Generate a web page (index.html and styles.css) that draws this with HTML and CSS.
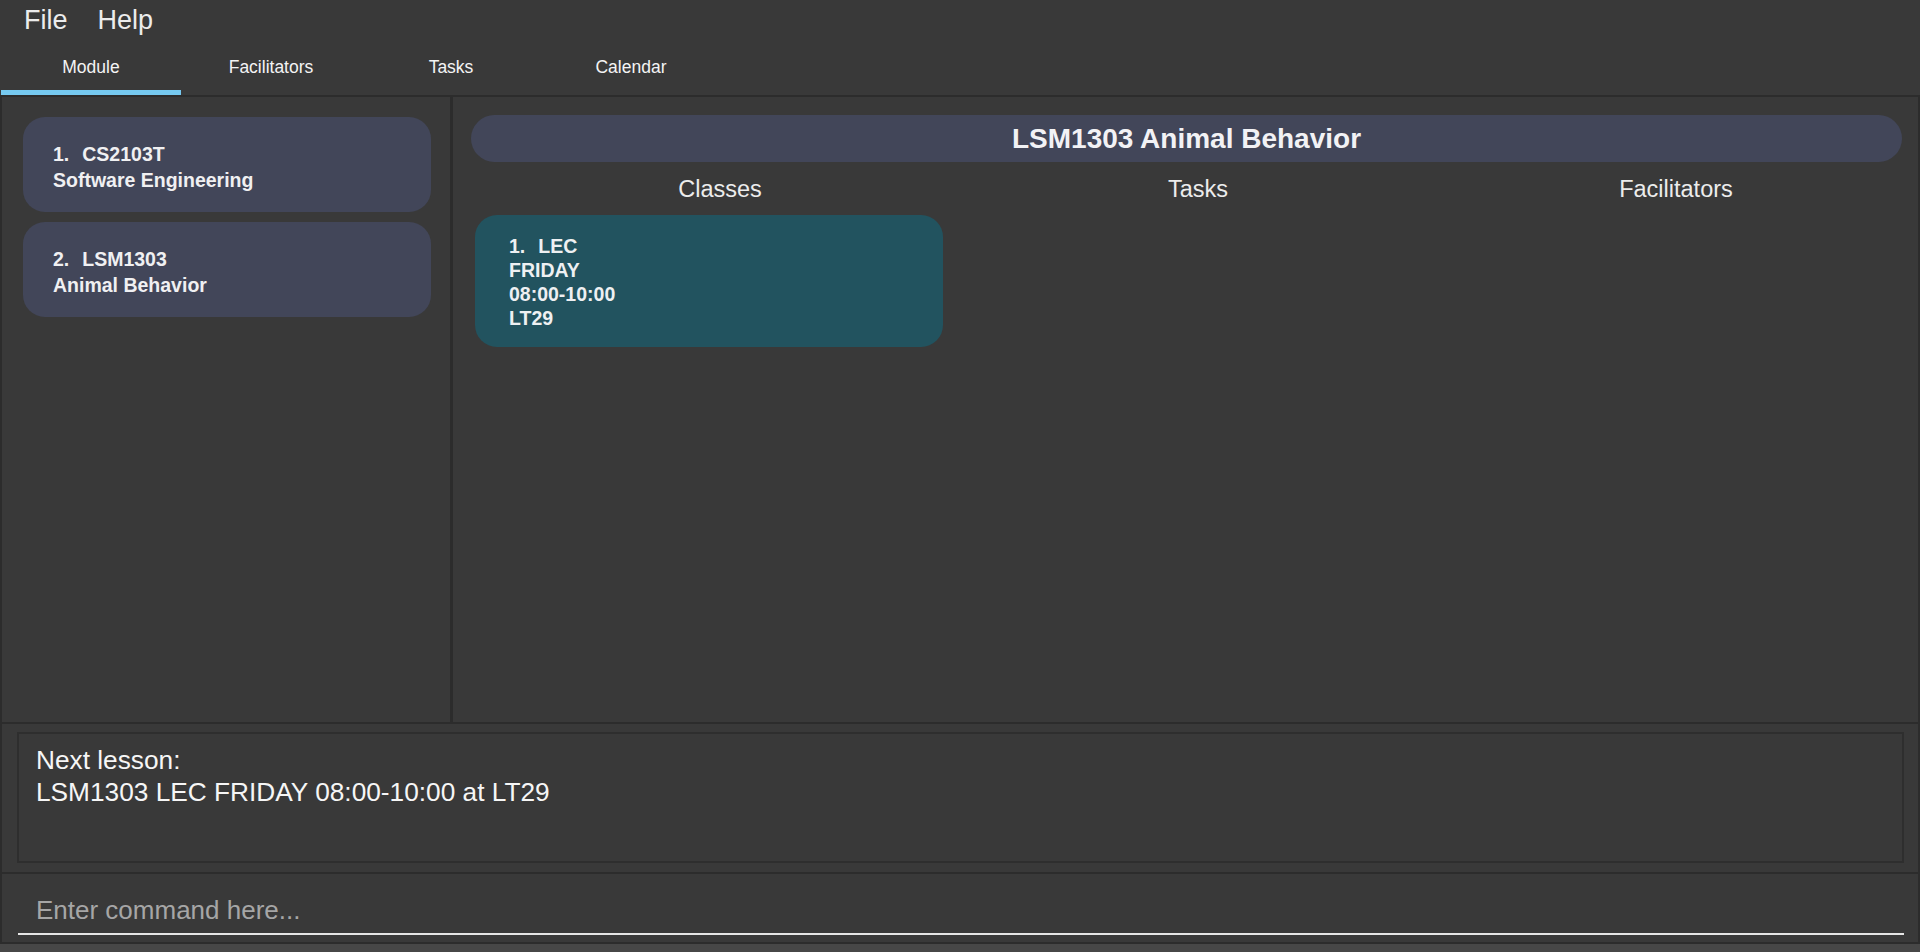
FILE: index.html
```html
<!DOCTYPE html>
<html lang="en">
<head>
<meta charset="utf-8">
<title>Module</title>
<link rel="stylesheet" href="styles.css">
</head>
<body>
<div class="menubar">
  <div class="menu-item">File</div>
  <div class="menu-item">Help</div>
</div>
<div class="tabbar">
  <div class="tab active">Module</div>
  <div class="tab">Facilitators</div>
  <div class="tab">Tasks</div>
  <div class="tab">Calendar</div>
</div>
<div class="main">
  <div class="left-pane">
    <div class="module-card">
      <div class="line"><span class="idx">1.</span>CS2103T</div>
      <div class="line">Software Engineering</div>
    </div>
    <div class="module-card">
      <div class="line"><span class="idx">2.</span>LSM1303</div>
      <div class="line">Animal Behavior</div>
    </div>
  </div>
  <div class="right-pane">
    <div class="title-pill">LSM1303 Animal Behavior</div>
    <div class="col-headers">
      <div class="col-header">Classes</div>
      <div class="col-header">Tasks</div>
      <div class="col-header">Facilitators</div>
    </div>
    <div class="cards-row">
      <div class="class-card">
        <div class="line"><span class="idx">1.</span>LEC</div>
        <div class="line">FRIDAY</div>
        <div class="line">08:00-10:00</div>
        <div class="line">LT29</div>
      </div>
    </div>
  </div>
</div>
<div class="result-area">
  <div class="result-box">
    <div>Next lesson:</div>
    <div>LSM1303 LEC FRIDAY 08:00-10:00 at LT29</div>
  </div>
</div>
<div class="command-area">
  <div class="command-input"><span class="placeholder">Enter command here...</span></div>
</div>
<div class="status-strip"></div>
</body>
</html>
```

FILE: styles.css
```css
html, body {
  margin: 0;
  padding: 0;
}
body {
  width: 1920px;
  height: 952px;
  overflow: hidden;
  background: #393939;
  color: #f0f0f2;
  font-family: "Liberation Sans", Arial, sans-serif;
  display: flex;
  flex-direction: column;
}

.menubar {
  height: 40px;
  box-sizing: border-box;
  padding: 5px 0 0 9px;
  display: flex;
  flex: none;
}
.menu-item {
  font-size: 27px;
  line-height: 31px;
  padding: 0 15px;
  color: #ececec;
}

.tabbar {
  height: 55px;
  display: flex;
  padding-left: 1px;
  flex: none;
}
.tab {
  width: 180px;
  box-sizing: border-box;
  padding-top: 17px;
  font-size: 17.5px;
  line-height: 21px;
  text-align: center;
  color: #f4f4f4;
}
.tab.active {
  border-bottom: 5px solid #76c9f0;
}

.main {
  height: 629px;
  box-sizing: border-box;
  border: 2px solid #2c2c2c;
  display: flex;
  flex: none;
}
.left-pane {
  width: 451px;
  box-sizing: border-box;
  border-right: 3px solid #2c2c2c;
  padding: 20px 19px 0 21px;
  display: flex;
  flex-direction: column;
  gap: 10px;
}
.module-card {
  height: 95px;
  box-sizing: border-box;
  background: #424659;
  border-radius: 22px;
  padding: 24px 0 0 30px;
  font-size: 19.5px;
  font-weight: bold;
  line-height: 26px;
}
.idx {
  display: inline-block;
  margin-right: 13px;
}

.right-pane {
  flex: 1;
  min-width: 0;
  padding: 18px 16px 0 18px;
  display: flex;
  flex-direction: column;
}
.title-pill {
  height: 47px;
  background: #424659;
  border-radius: 24px;
  text-align: center;
  font-size: 28px;
  font-weight: bold;
  line-height: 47px;
  color: #f2f2f5;
}
.col-headers {
  margin: 13px -3px 0 10px;
  display: grid;
  grid-template-columns: repeat(3, 478px);
}
.col-header {
  text-align: center;
  font-size: 23.5px;
  line-height: 28px;
  color: #ececec;
}
.cards-row {
  margin-top: 12px;
  padding-left: 4px;
  display: flex;
}
.class-card {
  width: 468px;
  height: 132px;
  box-sizing: border-box;
  background: #22535f;
  border-radius: 22px;
  padding: 19px 0 0 34px;
  font-size: 19.5px;
  font-weight: bold;
  line-height: 24px;
  color: #eef0f2;
}

.result-area {
  height: 150px;
  box-sizing: border-box;
  border: 2px solid #2c2c2c;
  border-top: none;
  padding: 8px 14px 0 15px;
  flex: none;
}
.result-box {
  height: 131px;
  box-sizing: border-box;
  border: 2px solid #2e2e2e;
  padding: 10px 0 0 17px;
  font-size: 26.25px;
  line-height: 32px;
  color: #f6f6f6;
}

.command-area {
  height: 70px;
  box-sizing: border-box;
  border: 2px solid #2c2c2c;
  border-top: none;
  padding: 20px 14px 0 16px;
  flex: none;
}
.command-input {
  height: 41px;
  box-sizing: border-box;
  border-bottom: 2px solid #e6e6e6;
  padding-left: 18px;
  font-size: 26px;
  line-height: 32px;
}
.placeholder {
  color: #a6a6a6;
}

.status-strip {
  flex: 1;
  background: #474747;
}
```
